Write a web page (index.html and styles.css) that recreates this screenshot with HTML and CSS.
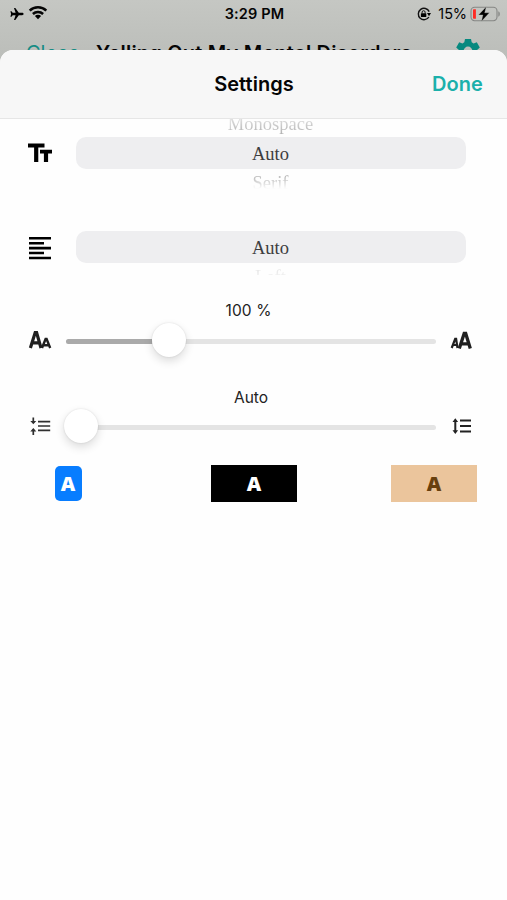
FILE: index.html
```html
<!DOCTYPE html>
<html lang="en">
<head>
<meta charset="utf-8">
<title>Settings</title>
<link rel="stylesheet" href="styles.css">
</head>
<body>
<div class="backdrop">
  <div class="status">
    <div class="status-left">
      <svg width="14" height="14" viewBox="0 0 14 14"><path d="M13.6 7c0-.7-.7-1.2-1.5-1.2H8.8L5.3 1H4l1.6 4.8H2.7L1.5 4.2H.4L1.1 7 .4 9.8h1.1l1.2-1.6h2.9L4 13h1.3l3.5-4.8h3.3c.8 0 1.5-.5 1.5-1.2z"/></svg>
      <svg width="20" height="15" viewBox="0 0 20 15"><g fill="none" stroke="#050505" stroke-width="2.5"><path d="M1.7 5.6a11.8 11.8 0 0 1 16.6 0"/><path d="M4.9 9a7.3 7.3 0 0 1 10.2 0"/></g><path d="M6.9 11a4.4 4.4 0 0 1 6.2 0L10 14.2z"/></svg>
    </div>
    <div class="time">3:29 PM</div>
    <div class="status-right">
      <svg width="14" height="14" viewBox="0 0 14 14"><path d="M11.9 10a5.700 5.700 0 1 1 .3-5.400" fill="none" stroke="#111" stroke-width="1.400"/><path d="M10 6h4l-2 3.200z"/><rect x="3.900" y="6.200" width="5.400" height="3.900" rx=".6"/><path d="M5.100 6.500V5.200a1.500 1.500 0 0 1 3 0v1.300" fill="none" stroke="#111"/></svg>
      <span class="percent">15%</span>
      <svg width="30" height="16" viewBox="0 0 30 16"><rect x="1" y="1.300" width="26" height="13.400" rx="3.600" fill="none" stroke="#858684" stroke-width="1.100"/><path d="M28.300 5.300c2 .8 2 4.600 0 5.400z" fill="#858684"/><path d="M4 3.200h1.900v9.600H4c-.7 0-1-.5-1-1V4.200c0-.6.3-1 1-1z" fill="#ff2b25"/><path d="M16.200.800 8.500 8.900h4.400l-1.400 6.400 7.900-8.500h-4.700z" stroke="#c3c5c1" stroke-width=".3"/></svg>
    </div>
  </div>
  <div class="reader-bar">
    <span class="close">Close</span>
    <span class="book">Yelling Out My Mental Disorders</span>
    <svg class="gear" width="26" height="26" viewBox="0 0 26 26"><path fill="#07897f" fill-rule="evenodd" d="M10 1h6l.7 3.300 1.900 1.100 3.200-1.100 3 5.200-2.500 2.300v2.400l2.500 2.300-3 5.200-3.200-1.100-1.900 1.100L16 25h-6l-.7-3.300-1.900-1.100-3.200 1.100-3-5.200 2.500-2.300v-2.400L1.200 9.500l3-5.200 3.200 1.100 1.900-1.100zM13 8.600a4.400 4.400 0 1 0 0 8.800 4.400 4.400 0 0 0 0-8.800z"/></svg>
  </div>
</div>
<main class="sheet">
  <header class="sheet-bar"><span></span><h1>Settings</h1><span class="done">Done</span></header>

  <section class="picker font-picker">
    <svg class="icon" width="26" height="26" viewBox="0 0 26 26"><path d="M1 3.500h16.500v4h-6.200V22H7.100V7.500H1zM13 9.700h12v3.700h-3.900V22h-4.200v-8.600H13z"/></svg>
    <div class="wheel"><span class="above">Monospace</span><span class="selected">Auto</span><span class="below">Serif</span></div>
  </section>

  <section class="picker align-picker">
    <svg class="icon" width="26" height="26" viewBox="0 0 26 26"><path d="M2 2h22v2.600H2zm0 5h15v2.500H2zm0 4.800h22v2.600H2zm0 5h15v2.500H2zm0 4.900h22v2.600H2z"/></svg>
    <div class="wheel"><span class="selected">Auto</span><span class="below">Left</span></div>
  </section>

  <section class="slider size-slider">
    <div class="value">100 %</div>
    <div class="slider-row">
      <svg class="icon" width="26" height="24" viewBox="0 0 26 24"><g fill="none" stroke="#202020"><path d="M3.400 20 8.200 4.600h1.400L14 20M5.500 14.900h7" stroke-width="3.200"/><path d="m15 20 3.600-9h1l3.600 9M16.500 17.200h5.500" stroke-width="2.400"/></g></svg>
      <div class="track"><div class="fill"></div><div class="thumb"></div></div>
      <svg class="icon" width="26" height="24" viewBox="0 0 26 24"><g fill="none" stroke="#202020"><path d="m2.700 20 3.500-9.100h.9L8.500 20M4.500 17h4" stroke-width="2.200"/><path d="m10.300 20.500 4.900-15h1.500l4.600 15M12.500 15.800h7" stroke-width="3.300"/></g></svg>
    </div>
  </section>

  <section class="slider line-slider">
    <div class="value">Auto</div>
    <div class="slider-row">
      <svg class="icon" width="26" height="24" viewBox="0 0 26 24"><g fill="none" stroke="#303030" stroke-width="1.700"><path d="M11 7.600h12.200M11 12h12.200M11 16.400h12.200M6.300 3.400v5.600M6.300 21v-5.600"/></g><path fill="#303030" d="M3.300 6.900h6l-3 3.400zM3.300 17.400h6l-3-3.400z"/></svg>
      <div class="track"><div class="thumb"></div></div>
      <svg class="icon" width="26" height="24" viewBox="0 0 26 24"><g fill="none" stroke="#222" stroke-width="2"><path d="M11 6.400h11M11 12h11M11 17.600h11M6.300 6.500v11"/></g><path fill="#222" d="M3.500 7.900h5.600L6.300 4.200zM3.500 16.200h5.600L6.300 19.900z"/></svg>
    </div>
  </section>

  <section class="themes">
    <div class="theme"><span class="light">A</span></div>
    <div class="theme dark">A</div>
    <div class="theme sepia">A</div>
  </section>
</main>
</body>
</html>
```
FILE: styles.css
```css
* { box-sizing: border-box; }
body {
  margin: 0;
  width: 507px;
  height: 900px;
  overflow: hidden;
  font-family: Inter, "Liberation Sans", sans-serif;
  color: #050505;
  background: linear-gradient(#c5c7c3 0, #babcb8 66px);
}
svg { display: block; flex: none; }
.backdrop { height: 50px; overflow: hidden; }
.status {
  height: 27px;
  padding: 0 7px 0 10px;
  display: grid;
  grid-template-columns: 1fr auto 1fr;
  align-items: center;
}
.status-left, .status-right { display: flex; align-items: center; }
.status-left { gap: 4px; }
.status-left svg:last-child { margin-top: -2px; }
.status-right { justify-content: flex-end; }
.time { font-size: 14.5px; font-weight: 600; letter-spacing: .15px; margin-right: 1px; }
.percent { font-size: 14.5px; letter-spacing: -.1px; margin: 0 3px 0 7px; }
.reader-bar {
  display: flex;
  padding: 13px 26px 0;
  font-size: 20px;
  line-height: 26px;
  white-space: nowrap;
}
.close { width: 70px; color: #168c84; }
.book { font-weight: 600; width: 333px; letter-spacing: .2px; }
.gear { margin: -2px 0 0 26px; }
.sheet {
  height: 850px;
  background: #fefefe;
  border-radius: 13px 13px 0 0;
  overflow: hidden;
}
.sheet-bar {
  height: 69px;
  padding: 0 24px 0 25px;
  display: grid;
  grid-template-columns: 1fr auto 1fr;
  align-items: center;
  background: #f7f7f7;
  border-bottom: 1px solid #e6e6e6;
}
h1, .done { margin: 0; font-size: 20px; font-weight: 600; letter-spacing: .05px; }
.done { text-align: right; color: #1bb0ab; }
.picker {
  display: grid;
  grid-template-columns: 47.5px 390px;
  padding-left: 28px;
}
.wheel {
  display: grid;
  text-align: center;
  font: 18.5px/30px "Liberation Serif", serif;
  overflow: hidden;
}
.font-picker { height: 72px; }
.font-picker .icon { margin-top: 21px; margin-left: -1px; }
.font-picker .wheel { grid-template-rows: 18px 32px 22px; }
.align-picker { height: 44px; margin-top: 40px; }
.align-picker .icon { margin-top: 4px; margin-left: -1px; }
.align-picker .wheel { grid-template-rows: 32px 12px; }
.selected {
  border-radius: 10px;
  background: #eeeef0;
  color: #3d3d40;
  line-height: 34px;
}
.above, .below { overflow: hidden; color: transparent; background-clip: text; -webkit-background-clip: text; }
.above { line-height: 10px; background-image: linear-gradient(#ddd, #aaa); }
.below { line-height: 28px; background-image: linear-gradient(#aaa 5px, #fefefe 20px); }
.align-picker .below { background-image: linear-gradient(#ddd, #f0f0f0); }
.slider { height: 87px; padding: 0 20px 0 27px; }
.size-slider { margin-top: 26px; }
.value { height: 20px; padding-right: 12px; line-height: 20px; font-size: 15.5px; text-align: center; color: #222; }
.size-slider .value { padding-right: 17px; letter-spacing: .1px; }
.slider-row { display: flex; align-items: center; height: 38px; }
.line-slider .slider-row { height: 36px; }
.track {
  width: 370px;
  height: 5px;
  margin: 3px 13px 0;
  border-radius: 3px;
  background: #e4e4e4;
  display: flex;
  align-items: center;
}
.fill { width: 86px; height: 5px; border-radius: 3px 0 0 3px; background: #aaa; }
.thumb {
  flex: none;
  width: 34px;
  height: 34px;
  margin: -3px 0 0 -2px;
  border-radius: 50%;
  background: #fff;
  box-shadow: 0 4px 10px rgba(0,0,0,.14), 0 0 2px rgba(0,0,0,.12);
}
.fill + .thumb { margin-left: 0; }
.themes {
  display: grid;
  grid-template-columns: 86px 86px 86px;
  column-gap: 94px;
  margin: -10px 0 0 25px;
}
.theme {
  height: 37px;
  display: flex;
  align-items: center;
  justify-content: center;
  font: 800 20px/37px "Open Sans", sans-serif;
}
.theme:first-child { width: 86px; }
.dark { margin-left: 6px; margin-right: -6px; }
.sepia { margin-left: 6px; margin-right: -6px; }
.light { width: 27px; height: 35px; line-height: 35px; border-radius: 5px; background: #087dff; color: #fff; text-align: center; }
.dark { background: #000; color: #fff; }
.sepia { background: #ebc59c; color: #68400e; }
```
